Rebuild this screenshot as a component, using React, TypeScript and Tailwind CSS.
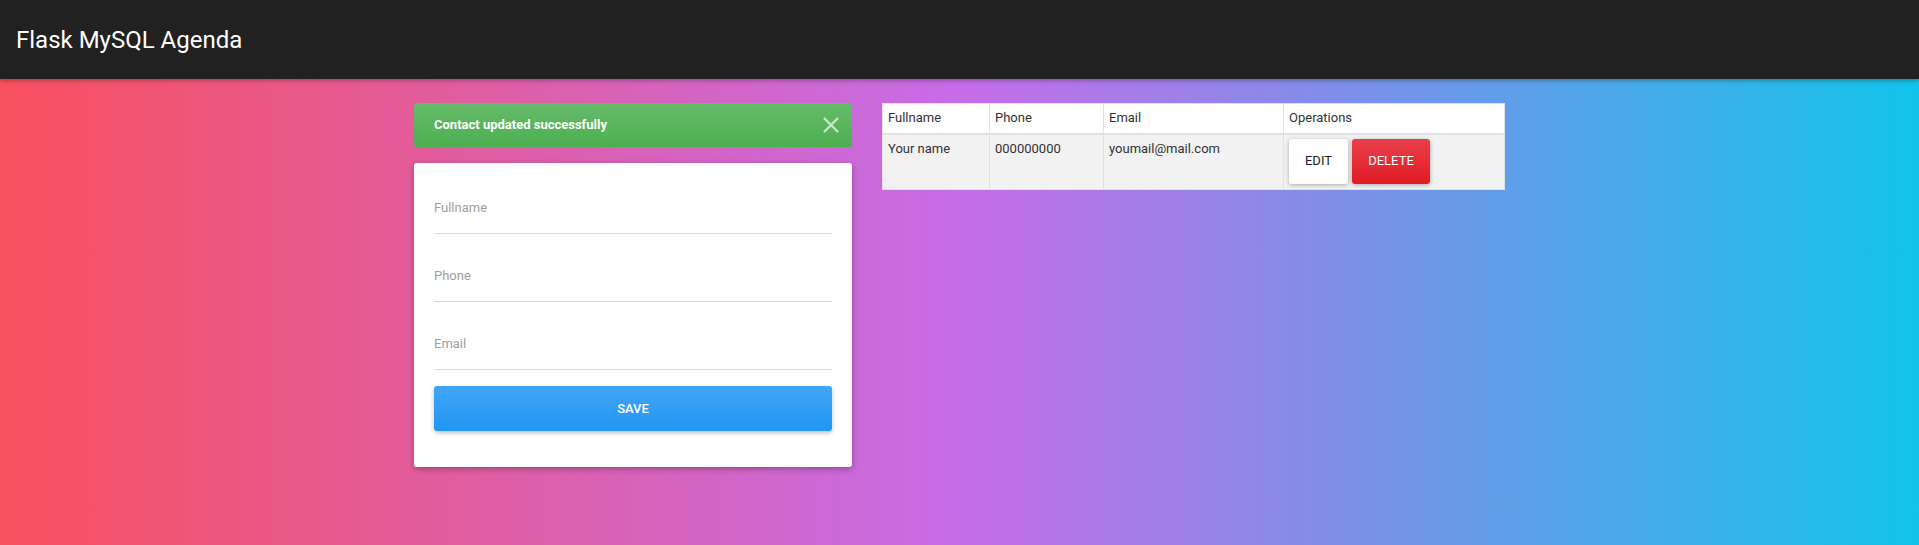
import { X } from 'lucide-react';

const fields = ['Fullname', 'Phone', 'Email'];

export default function App() {
    return (
        <div
            className="min-h-screen flex flex-col bg-[linear-gradient(to_right,#f9505e_0%,#c66ce8_50%,#12c3ea_100%)]"
            style={{ fontFamily: 'Roboto, "Noto Sans", sans-serif' }}
        >
            <header className="h-[79px] bg-[#212121] flex items-center px-[16px] shadow-[0_2px_4px_rgba(0,0,0,0.25)] relative z-10">
                <h1 className="text-[24px] text-white leading-none">Flask MySQL Agenda</h1>
            </header>

            <main className="flex justify-center gap-[30px] pt-[24px]">
                <div className="w-[438px] flex flex-col gap-[16px]">
                    <div className="h-[44px] rounded-[3px] bg-[linear-gradient(to_bottom,#66bb6a,#4caf50)] flex items-center justify-between pl-[20px] pr-[8px]">
                        <span className="text-[13px] font-bold text-white">Contact updated successfully</span>
                        <X className="h-[26px] w-[26px] text-[#c8e6c9]" strokeWidth={2.2} />
                    </div>

                    <div className="bg-white rounded-[3px] shadow-[0_2px_6px_rgba(0,0,0,0.3)] px-[20px] pt-[3px] pb-[36px]">
                        {fields.map((f) => (
                            <div key={f} className="h-[68px] border-b border-[#dadada] flex items-end pb-[17px]">
                                <span className="text-[13px] leading-[16px] text-[#9e9e9e]">{f}</span>
                            </div>
                        ))}
                        <button className="mt-[16px] w-full h-[45px] rounded-[3px] bg-[linear-gradient(to_bottom,#42a5f5,#2196f3)] text-white text-[13px] font-medium uppercase shadow-[0_2px_4px_rgba(0,0,0,0.25)]">
                            Save
                        </button>
                    </div>
                </div>

                <div className="w-[623px]">
                    <table className="w-full border-collapse border border-[#dee2e6] text-[13px] text-[#333] table-fixed">
                        <colgroup>
                            <col className="w-[107px]" />
                            <col className="w-[114px]" />
                            <col className="w-[180px]" />
                            <col />
                        </colgroup>
                        <thead>
                            <tr className="bg-white h-[30px]">
                                <th className="font-normal text-left px-[5px] border border-[#dee2e6] border-b-2 leading-[16px]">Fullname</th>
                                <th className="font-normal text-left px-[5px] border border-[#dee2e6] border-b-2 leading-[16px]">Phone</th>
                                <th className="font-normal text-left px-[5px] border border-[#dee2e6] border-b-2 leading-[16px]">Email</th>
                                <th className="font-normal text-left px-[5px] border border-[#dee2e6] border-b-2 leading-[16px]">Operations</th>
                            </tr>
                        </thead>
                        <tbody>
                            <tr className="bg-[#f2f2f2] h-[56px] align-top">
                                <td className="px-[5px] pt-[6px] border border-[#dee2e6] leading-[16px]">Your name</td>
                                <td className="px-[5px] pt-[6px] border border-[#dee2e6] leading-[16px]">000000000</td>
                                <td className="px-[5px] pt-[6px] border border-[#dee2e6] leading-[16px]">youmail@mail.com</td>
                                <td className="pl-[5px] pt-[4px] border border-[#dee2e6]">
                                    <div className="flex gap-[4px]">
                                        <button className="w-[59px] h-[45px] rounded-[3px] bg-white text-[13px] text-[#222] uppercase shadow-[0_1px_4px_rgba(0,0,0,0.3)]">
                                            Edit
                                        </button>
                                        <button className="w-[78px] h-[45px] rounded-[3px] bg-[linear-gradient(to_bottom,#e8404a,#e11b24)] text-[13px] text-white uppercase shadow-[0_1px_4px_rgba(0,0,0,0.3)]">
                                            Delete
                                        </button>
                                    </div>
                                </td>
                            </tr>
                        </tbody>
                    </table>
                </div>
            </main>
        </div>
    );
}
